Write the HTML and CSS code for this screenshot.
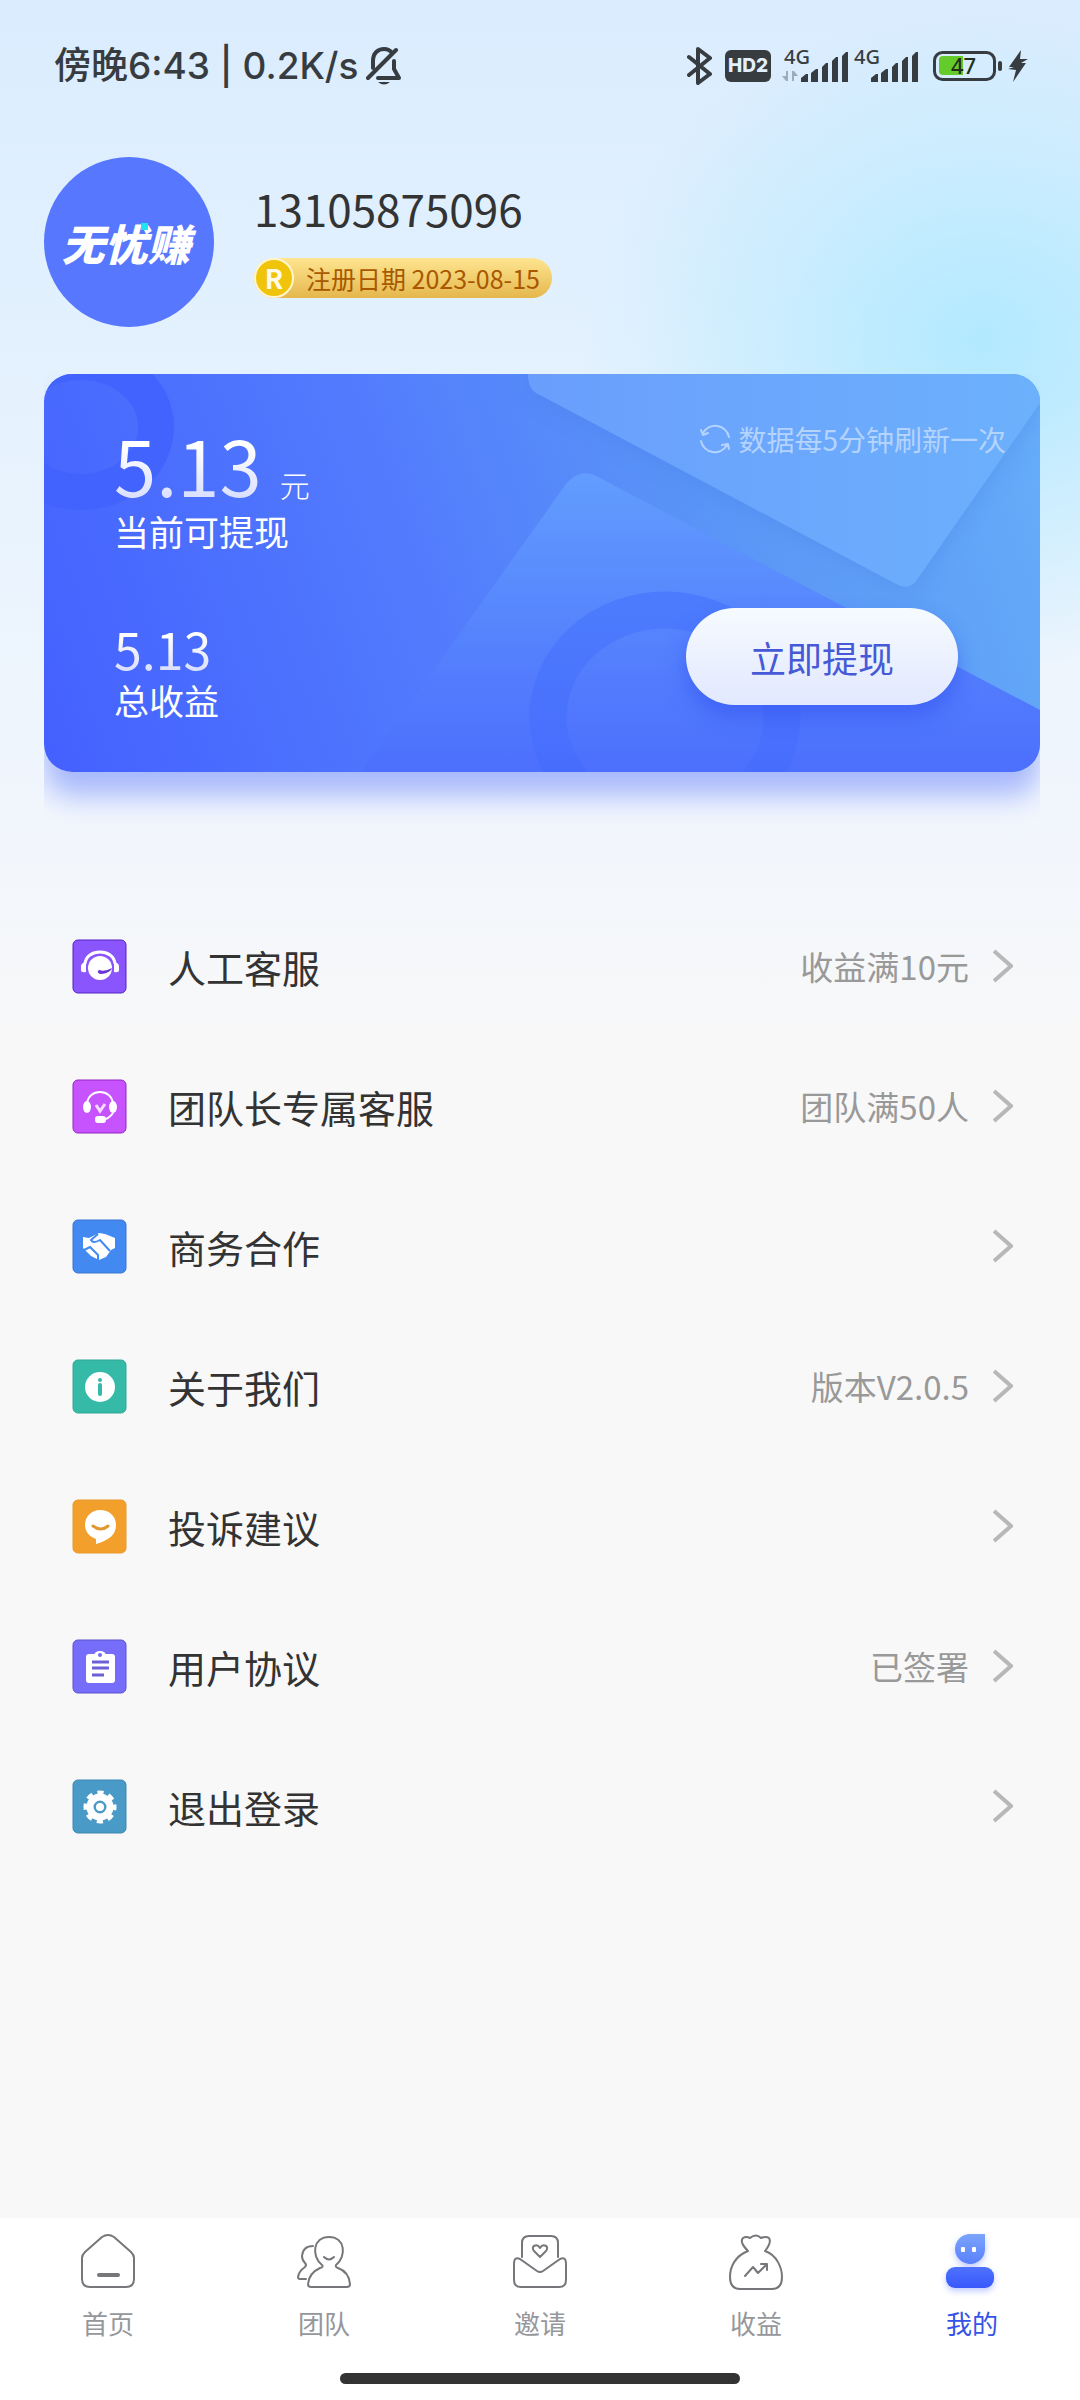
FILE: index.html
```html
<!DOCTYPE html>
<html lang="zh-CN">
<head>
  <meta charset="UTF-8">
  <meta name="viewport" content="width=device-width, initial-scale=1">
  <title>我的</title>
  <link rel="stylesheet" href="styles.css">
</head>
<body>

  <div class="status-bar">
    <div class="status-left">
      <span>傍晚6:43 | 0.2K/s</span>
      <svg width="36" height="38" viewBox="0 0 36 38" fill="none" stroke="#373c41" stroke-width="4" stroke-linecap="round" stroke-linejoin="round">
        <path d="M7 21V14C7 6 12 2 18 2C22 2 24 3 26 6"/>
        <path d="M2 31L30 3"/>
        <path d="M12 31H33L28 22V14"/>
        <path d="M12 35H24Q18 40 12 35Z" fill="#373c41" stroke="none"/>
      </svg>
    </div>
    <div class="status-right">
      <svg class="bluetooth" width="26" height="38" viewBox="0 0 26 38" fill="none" stroke="#373c41" stroke-width="4" stroke-linecap="round" stroke-linejoin="round">
        <path d="M2 10L23 27L11 36V2L23 11L2 28"/>
      </svg>
      <span class="hd">HD2</span>
      <svg class="signal" width="68" height="34" viewBox="0 0 68 34" fill="#373c41">
        <text x="2" y="15">4G</text>
        <path d="M4 22V32L0 27H4V22H6V32H4ZM10 32V22H12V27H16L12 22V32Z" fill="#9eabb9"/>
        <path d="M19 33V29L24 25H26V33ZM29 33V24L34 20H36V33ZM40 33V18L44 14H46V33ZM50 33V12L54 8H56V33ZM60 33V7L64 3H66V33Z"/>
      </svg>
      <svg class="signal" width="68" height="34" viewBox="0 0 68 34" fill="#373c41">
        <text x="2" y="15">4G</text>
        <path d="M19 33V29L24 25H26V33ZM29 33V24L34 20H36V33ZM40 33V18L44 14H46V33ZM50 33V12L54 8H56V33ZM60 33V7L64 3H66V33Z"/>
      </svg>
      <svg class="battery" width="70" height="32" viewBox="0 0 70 32">
        <rect x="1.500" y="2.500" width="60" height="27" rx="8" fill="none" stroke="#373c41" stroke-width="3"/>
        <path d="M10 6H30V25H10Q6 25 6 21V10Q6 6 10 6Z" fill="#65cb2b"/>
        <rect x="65" y="11" width="4" height="10" rx="2" fill="#373c41"/>
        <text x="18" y="24" fill="#20301c">47</text>
      </svg>
      <svg class="bolt" width="20" height="32" viewBox="0 0 20 32" fill="#373c41">
        <path d="M13 0L1 17H6L0 19L8 20L5 32L18 13H13L20 9H12Z"/>
      </svg>
    </div>
  </div>

  <header class="profile">
    <div class="avatar"><span>无忧赚</span></div>
    <div class="profile-info">
      <h1>13105875096</h1>
      <div class="badge"><b>R</b><span>注册日期 2023-08-15</span></div>
    </div>
  </header>

  <main>
    <section class="card">
      <svg class="card-bg" viewBox="0 0 996 398" preserveAspectRatio="none">
        <defs>
          <linearGradient id="flap" x1="0" y1="0" x2="1" y2="0">
            <stop offset="0" stop-color="#6a9efd"/>
            <stop offset="1" stop-color="#6cb1fc"/>
          </linearGradient>
          <linearGradient id="front" x1="0" y1="0" x2="0" y2="1">
            <stop offset="0" stop-color="#629dfe"/>
            <stop offset="0.600" stop-color="#5480fd"/>
            <stop offset="1" stop-color="#4c6ffd"/>
          </linearGradient>
          <linearGradient id="ring" x1="0" y1="0" x2="0" y2="1">
            <stop offset="0" stop-color="#4c7bfd"/>
            <stop offset="1" stop-color="#4668fe"/>
          </linearGradient>
          <filter id="soft" x="-10%" y="-10%" width="120%" height="120%">
            <feGaussianBlur stdDeviation="12"/>
          </filter>
        </defs>
        <ellipse cx="37" cy="53" rx="75" ry="65" fill="none" stroke="#4263fe" stroke-width="36"/>
        <path d="M484 0Q484 17 496 21L854 211Q867 217 875 203L996 29V0Z" fill="#3f78e0" opacity="0.350" filter="url(#soft)"/>
        <path d="M484 0Q484 17 496 21L854 211Q867 217 875 203L996 29V0Z" fill="url(#flap)"/>
        <path d="M317 398L522 110Q537 92 556 104L996 336V398Z" fill="url(#front)"/>
        <ellipse cx="621" cy="343" rx="117" ry="107" fill="none" stroke="url(#ring)" stroke-width="37"/>
      </svg>
      <div class="balance">
        <p class="amount"><strong>5.13</strong><span>元</span></p>
        <p class="label">当前可提现</p>
        <p class="total">5.13</p>
        <p class="label">总收益</p>
      </div>
      <div class="card-side">
        <p class="refresh">
          <svg width="30" height="30" viewBox="0 0 30 30" fill="none" stroke="currentColor" stroke-width="2" stroke-linecap="round" stroke-linejoin="round">
            <path d="M3 9A14 14 0 0 1 29 13M1 6L3 11L8 9"/>
            <path d="M27 21A14 14 0 0 1 1 17M29 25L28 20L22 21"/>
          </svg>
          数据每5分钟刷新一次
        </p>
        <button class="withdraw" type="button">立即提现</button>
      </div>
    </section>

    <nav class="menu">
      <a href="#">
        <svg class="icon" viewBox="0 0 55 55">
          <rect x="1" y="1" width="53" height="53" rx="5" fill="#8a55fd" stroke="#5323c4" stroke-width="1"/>
          <path d="M13 25C14 9 42 9 43 25" fill="none" stroke="#fff" stroke-width="3"/>
          <path d="M9 27Q9 24 14 23V33Q9 34 9 31ZM47 27Q47 24 42 23V33Q47 34 47 31Z" fill="#fff"/>
          <circle cx="28" cy="29" r="12" fill="#fff"/>
          <path d="M39 31Q35 35 28 35Q24 33 27 31Q33 33 40 29" fill="#6a35d8"/>
        </svg>
        <span>人工客服</span><em>收益满10元</em>
        <svg class="arrow" viewBox="0 0 20 34"><path d="M1 2L18 17L1 32"/></svg>
      </a>
      <a href="#">
        <svg class="icon" viewBox="0 0 55 55">
          <rect x="1" y="1" width="53" height="53" rx="5" fill="#c653fd" stroke="#9424c4" stroke-width="1"/>
          <path d="M15 25C16 9 40 9 41 25M41 34Q37 40 30 41" fill="none" stroke="#fff" stroke-width="2"/>
          <ellipse cx="15" cy="28" rx="4" ry="6" fill="#fff"/>
          <ellipse cx="41" cy="28" rx="4" ry="6" fill="#fff"/>
          <rect x="23" y="37" width="11" height="7" rx="3" fill="#fff"/>
          <path d="M24 26L28 32L33 25" fill="none" stroke="#f6dcff" stroke-width="3"/>
        </svg>
        <span>团队长专属客服</span><em>团队满50人</em>
        <svg class="arrow" viewBox="0 0 20 34"><path d="M1 2L18 17L1 32"/></svg>
      </a>
      <a href="#">
        <svg class="icon" viewBox="0 0 55 55">
          <rect x="1" y="1" width="53" height="53" rx="5" fill="#4389f2" stroke="#3a74cf" stroke-width="1"/>
          <path d="M11 18L17 19L27 14L33 15L43 19V29L39 31L34 38L27 41L19 37L11 29Z" fill="#fff"/>
          <path d="M26 15L19 21Q21 25 28 21L38 32M12 31L18 28L26 36V41" fill="none" stroke="#4389f2" stroke-width="2"/>
        </svg>
        <span>商务合作</span>
        <svg class="arrow" viewBox="0 0 20 34"><path d="M1 2L18 17L1 32"/></svg>
      </a>
      <a href="#">
        <svg class="icon" viewBox="0 0 55 55">
          <rect x="1" y="1" width="53" height="53" rx="5" fill="#36baa8" stroke="#2fa896" stroke-width="1"/>
          <circle cx="28" cy="28" r="15" fill="#fff"/>
          <circle cx="28" cy="21" r="2" fill="#36baa8"/>
          <path d="M28 26V35" stroke="#36baa8" stroke-width="4" stroke-linecap="round"/>
        </svg>
        <span>关于我们</span><em>版本V2.0.5</em>
        <svg class="arrow" viewBox="0 0 20 34"><path d="M1 2L18 17L1 32"/></svg>
      </a>
      <a href="#">
        <svg class="icon" viewBox="0 0 55 55">
          <rect x="1" y="1" width="53" height="53" rx="5" fill="#f2a02b" stroke="#e8982a" stroke-width="1"/>
          <path d="M28 11C19 11 13 18 13 26C13 33 18 38 24 40V45C38 41 44 35 44 26C44 17 37 11 28 11Z" fill="#fff"/>
          <path d="M21 27Q29 33 36 27" fill="none" stroke="#e0982f" stroke-width="3" stroke-linecap="round"/>
        </svg>
        <span>投诉建议</span>
        <svg class="arrow" viewBox="0 0 20 34"><path d="M1 2L18 17L1 32"/></svg>
      </a>
      <a href="#">
        <svg class="icon" viewBox="0 0 55 55">
          <rect x="1" y="1" width="53" height="53" rx="5" fill="#766dfb" stroke="#5a52cf" stroke-width="1"/>
          <rect x="14" y="15" width="29" height="29" rx="3" fill="#fff"/>
          <path d="M22 16Q23 12 28 12Q33 12 34 16Z" fill="#fff"/>
          <circle cx="28" cy="16" r="2" fill="#766dfb"/>
          <path d="M20 23H37M20 29H37M20 36H32" stroke="#6a61d8" stroke-width="3"/>
        </svg>
        <span>用户协议</span><em>已签署</em>
        <svg class="arrow" viewBox="0 0 20 34"><path d="M1 2L18 17L1 32"/></svg>
      </a>
      <a href="#">
        <svg class="icon" viewBox="0 0 55 55">
          <rect x="1" y="1" width="53" height="53" rx="5" fill="#4a9ac8" stroke="#3f87b0" stroke-width="1"/>
          <circle cx="28" cy="28" r="14" fill="none" stroke="#fff" stroke-width="5" stroke-dasharray="6 5" stroke-dashoffset="3"/>
          <circle cx="28" cy="28" r="10" fill="none" stroke="#fff" stroke-width="7"/>
          <circle cx="28" cy="28" r="4" fill="#fff"/>
        </svg>
        <span>退出登录</span>
        <svg class="arrow" viewBox="0 0 20 34"><path d="M1 2L18 17L1 32"/></svg>
      </a>
    </nav>
  </main>

  <footer class="tab-bar">
    <nav class="tabs">
      <a href="#">
        <svg viewBox="0 0 54 56">
          <path d="M21 3Q27 -1 33 3L50 18Q53 21 53 24V45Q53 53 45 53H9Q1 53 1 45V24Q1 21 4 18Z"/>
          <path d="M18 41H37" stroke-width="4"/>
        </svg>
        <span>首页</span>
      </a>
      <a href="#">
        <svg viewBox="0 0 54 56">
          <path d="M25 31C14 22 16 3 32 3C48 3 50 22 39 31Q38 33 41 34Q52 38 53 50Q53 53 50 53H14Q11 53 11 50Q12 39 23 34Q27 33 25 31Z"/>
          <path d="M16 12Q6 12 5 22Q5 26 8 29Q10 31 8 33Q2 37 1 43Q1 45 3 45H9"/>
          <path d="M27 23Q32 28 37 23"/>
        </svg>
        <span>团队</span>
      </a>
      <a href="#">
        <svg viewBox="0 0 54 56">
          <path d="M9 23V9Q9 2 16 2H38Q45 2 45 9V23"/>
          <path d="M1 30Q1 22 7 25L24 37Q27 39 30 37L47 25Q53 22 53 30V46Q53 53 46 53H8Q1 53 1 46Z"/>
          <path d="M27 23L21 17C17 12 24 9 27 14C30 9 37 12 33 17Z"/>
        </svg>
        <span>邀请</span>
      </a>
      <a href="#">
        <svg viewBox="0 0 54 56">
          <path d="M19 17C14 12 11 7 14 4Q17 2 21 4Q27 -1 32 4Q37 2 40 4C42 7 40 12 36 17C48 21 53 34 53 43Q53 55 43 55H11Q1 55 1 43C1 33 6 22 19 17Z"/>
          <path d="M16 42L24 33L29 39L38 30M32 30H38V36"/>
        </svg>
        <span>收益</span>
      </a>
      <a href="#" class="active">
        <svg viewBox="0 0 54 56">
          <defs>
            <linearGradient id="head" x1="0" y1="0" x2="0" y2="1">
              <stop offset="0" stop-color="#7ba4fb"/>
              <stop offset="1" stop-color="#5a80fc"/>
            </linearGradient>
            <linearGradient id="torso" x1="0" y1="0" x2="0" y2="1">
              <stop offset="0" stop-color="#4e72fd"/>
              <stop offset="1" stop-color="#3a58fd"/>
            </linearGradient>
          </defs>
          <path d="M26 0H40V16A15 15 0 1 1 26 0Z" fill="url(#head)"/>
          <rect x="1" y="33" width="48" height="21" rx="9" fill="url(#torso)"/>
          <rect x="16" y="13" width="4" height="5" rx="1" fill="#fff"/>
          <rect x="27" y="13" width="4" height="5" rx="1" fill="#fff"/>
        </svg>
        <span>我的</span>
      </a>
    </nav>
    <div class="home-indicator"></div>
  </footer>

</body>
</html>
```

FILE: styles.css
```css
:root {
  --primary-color: #3553e6;
  --text-color: #333;
  --muted-color: #999;
  --status-color: #373c41;
  --background-color: #f8f8f8;
}

* {
  box-sizing: border-box;
  margin: 0;
  padding: 0;
}

body {
  min-height: 100vh;
  display: flex;
  flex-direction: column;
  font-family: "Noto Sans CJK SC", sans-serif;
  color: var(--text-color);
  background:
    radial-gradient(ellipse 400px 330px at 91% 340px, #b2e9ff 0%, rgba(184, 234, 255, 0.75) 35%, rgba(220, 240, 253, 0) 100%),
    linear-gradient(#daecfe 0, #e3f1fe 330px, #f1f6fd 800px, #f8f8f8 1050px);
  background-color: var(--background-color);
  background-repeat: no-repeat;
}

a {
  color: inherit;
  text-decoration: none;
}

svg {
  flex: none;
}

/* status bar */
.status-bar {
  height: 132px;
  padding: 0 52px 0 54px;
  display: flex;
  align-items: center;
  justify-content: space-between;
  color: var(--status-color);
}

.status-left,
.status-right {
  display: flex;
  align-items: center;
}

.status-left {
  gap: 8px;
  font-family: Inter, "Noto Sans CJK SC", sans-serif;
  font-size: 37px;
  font-weight: 500;
  line-height: 40px;
}

.hd {
  margin: 0 11px 0 12px;
  width: 46px;
  height: 32px;
  border-radius: 6px;
  background: var(--status-color);
  color: #e2effd;
  font: 800 19px/32px Inter, sans-serif;
  text-align: center;
}

.signal {
  margin-right: 2px;
  overflow: visible;
}

.signal text {
  font: 500 20px "Noto Sans", sans-serif;
}

.battery {
  margin: 0 5px 0 11px;
}

.battery text {
  font: 500 22px "Noto Sans", sans-serif;
}

/* profile */
.profile {
  padding: 25px 44px 0;
  display: flex;
  gap: 40px;
}

.avatar {
  position: relative;
  width: 170px;
  height: 170px;
  padding-right: 6px;
  border-radius: 50%;
  background: #5677fe;
  color: #fff;
  display: flex;
  align-items: center;
  justify-content: center;
  font-size: 43px;
  font-weight: 900;
  font-style: italic;
}

.avatar::after {
  content: "";
  position: absolute;
  left: 97px;
  top: 66px;
  width: 7px;
  height: 7px;
  background: #1fe6ee;
}

.profile-info {
  padding-top: 21px;
}

.profile-info h1 {
  font-size: 44px;
  font-weight: 400;
  line-height: 60px;
  margin-bottom: 20px;
}

.badge {
  display: flex;
  align-items: center;
  height: 40px;
  padding-right: 12px;
  border-radius: 20px;
  background: linear-gradient(#fee591, #e5b74c);
  color: #a85800;
  font-size: 25px;
  line-height: 40px;
}

.badge b {
  width: 40px;
  height: 40px;
  margin-right: 12px;
  border: 2px solid #fff5cf;
  border-radius: 50%;
  background: #f1c40c;
  color: #fffbe8;
  font: 700 27px/36px "Noto Sans CJK SC", sans-serif;
  text-align: center;
}

/* balance card */
.card {
  position: relative;
  margin: 47px 40px 0 44px;
  padding: 45px 34px 50px 70px;
  display: flex;
  justify-content: space-between;
  border-radius: 28px;
  background: linear-gradient(70deg, #4460ff 0%, #527cfd 40%, #5b98f6 70%, #66aef9 100%);
  box-shadow: 0 24px 28px rgba(80, 110, 250, 0.45);
  clip-path: inset(0 0 -60px 0);
  color: #fff;
}

.card-bg {
  position: absolute;
  inset: 0;
  width: 100%;
  height: 100%;
  border-radius: 28px;
}

.balance,
.card-side {
  position: relative;
}

.amount {
  display: flex;
  align-items: baseline;
  gap: 18px;
  font-size: 30px;
}

.amount span {
  font-weight: 300;
  line-height: 30px;
}

.amount strong {
  font-size: 76px;
  font-weight: 400;
  line-height: 90px;
}

.amount strong,
.total {
  background: linear-gradient(#fff 30%, #d8deff 90%);
  background-clip: text;
  -webkit-background-clip: text;
  color: transparent;
}

.label {
  font-size: 35px;
  line-height: 44px;
}

.total {
  margin-top: 65px;
  font-size: 50px;
  line-height: 60px;
}

.card-side {
  display: flex;
  flex-direction: column;
  align-items: flex-end;
  justify-content: space-between;
}

.refresh {
  display: flex;
  align-items: center;
  gap: 8px;
  color: #b4d3fd;
  font-size: 28px;
  line-height: 40px;
}

.withdraw {
  margin: 0 48px 17px 0;
  padding: 0 64px;
  height: 97px;
  border: none;
  border-radius: 49px;
  background: linear-gradient(#f6fbff, #e2e8ff);
  box-shadow: 0 12px 20px rgba(50, 80, 240, 0.5);
  color: #4659d6;
  font-family: inherit;
  font-size: 36px;
  line-height: 92px;
  cursor: pointer;
}

/* menu */
.menu {
  margin-top: 124px;
}

.menu a {
  height: 140px;
  padding: 0 67px 0 72px;
  display: flex;
  align-items: center;
  font-size: 38px;
}

.menu span {
  flex: 1;
  margin-left: 41px;
}

.menu em {
  color: var(--muted-color);
  font-size: 33px;
  font-style: normal;
}

.icon {
  width: 55px;
  height: 55px;
}

.arrow {
  width: 20px;
  height: 34px;
  margin-left: 24px;
  fill: none;
  stroke: #b8b8b8;
  stroke-width: 4;
}

/* tab bar */
.tab-bar {
  margin-top: auto;
  padding: 16px 0;
  background: #fff;
}

.tabs {
  display: grid;
  grid-template-columns: repeat(5, 1fr);
}

.tabs a {
  display: flex;
  flex-direction: column;
  align-items: center;
  gap: 15px;
  color: #96979b;
  font-size: 26px;
  line-height: 36px;
}

.tabs svg {
  width: 54px;
  height: 56px;
  overflow: visible;
  fill: none;
  stroke: #77777b;
  stroke-width: 2;
  stroke-linecap: round;
  stroke-linejoin: round;
}

.tabs .active {
  color: var(--primary-color);
}

.tabs .active svg {
  stroke: none;
  filter: drop-shadow(0 3px 3px rgba(70, 100, 255, 0.35));
}

.home-indicator {
  width: 37%;
  height: 11px;
  margin: 32px auto 0;
  border-radius: 6px;
  background: #333;
}
```
